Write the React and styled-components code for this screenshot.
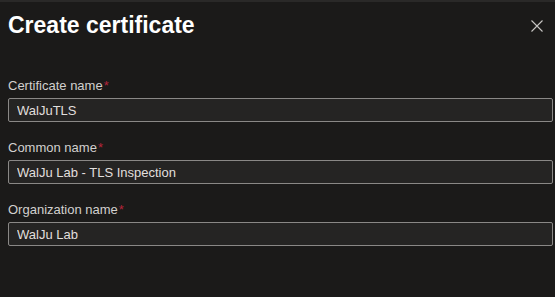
import styled, { createGlobalStyle } from "styled-components";

const GlobalStyle = createGlobalStyle`
  html, body {
    margin: 0;
    padding: 0;
    background: #1b1a19;
  }
  body {
    font-family: "Liberation Sans", Arial, sans-serif;
    color: #e1dfdd;
  }
`;

const fields = [
  { label: "Certificate name", value: "WalJuTLS" },
  { label: "Common name", value: "WalJu Lab - TLS Inspection" },
  { label: "Organization name", value: "WalJu Lab" },
];

export default function App() {
  return (
    <>
      <GlobalStyle />
      <Panel>
        <TopStrip />
        <Header>
          <Title>Create certificate</Title>
          <CloseButton aria-label="Close">
            <svg width="12" height="12" viewBox="0 0 12 12">
              <path
                d="M0.5 0.5 L11.5 11.5 M11.5 0.5 L0.5 11.5"
                stroke="#c8c6c4"
                strokeWidth="1.1"
                fill="none"
              />
            </svg>
          </CloseButton>
        </Header>
        <Form>
          {fields.map((field) => (
            <Field key={field.label}>
              <Label>
                {field.label}
                <Required>*</Required>
              </Label>
              <Input defaultValue={field.value} />
            </Field>
          ))}
        </Form>
      </Panel>
    </>
  );
}

const Panel = styled.div`
  width: 555px;
  height: 297px;
  background: #1b1a19;
  overflow: hidden;
`;

const TopStrip = styled.div`
  height: 2px;
  background: #2a2928;
`;

const Header = styled.div`
  display: flex;
  align-items: center;
  justify-content: space-between;
  padding: 9px 12px 0 8px;
`;

const Title = styled.h1`
  margin: 0;
  font-size: 23px;
  line-height: 28px;
  font-weight: 700;
  color: #ffffff;
`;

const CloseButton = styled.button`
  display: flex;
  align-items: center;
  justify-content: center;
  width: 12px;
  height: 12px;
  padding: 0;
  margin-top: 2px;
  border: none;
  background: transparent;
  cursor: pointer;
`;

const Form = styled.div`
  display: flex;
  flex-direction: column;
  gap: 17px;
  padding: 38px 2px 0 8px;
`;

const Field = styled.div`
  display: flex;
  flex-direction: column;
  gap: 3px;
`;

const Label = styled.label`
  font-size: 13px;
  line-height: 18px;
  color: #d2d0ce;
`;

const Required = styled.span`
  color: #b3243a;
  margin-left: 1px;
`;

const Input = styled.input`
  box-sizing: border-box;
  width: 100%;
  height: 24px;
  padding: 0 8px;
  border: 1px solid #8a8886;
  border-radius: 2px;
  background: #252423;
  color: #e1dfdd;
  font-family: "Liberation Sans", Arial, sans-serif;
  font-size: 13px;
  outline: none;
`;
